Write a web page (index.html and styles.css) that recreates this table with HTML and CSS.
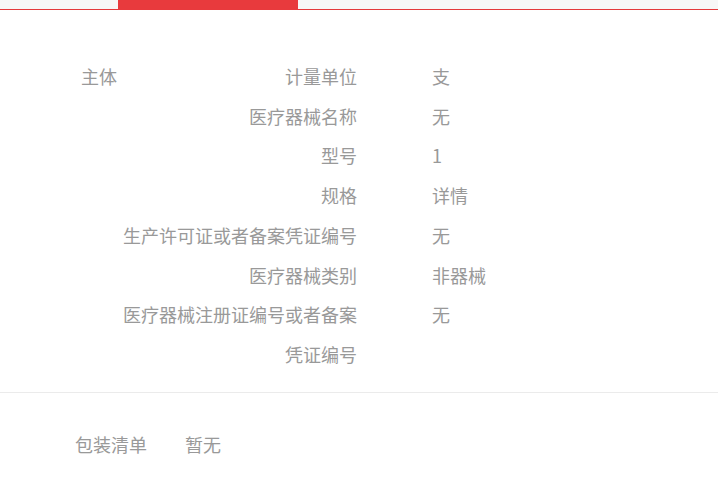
FILE: index.html
```html
<!DOCTYPE html>
<html lang="zh-CN">
<head>
<meta charset="utf-8">
<title>规格参数</title>
<link rel="stylesheet" href="styles.css">
</head>
<body>
<div class="tabbar"><div class="tab"></div></div>
<div class="spec">
  <div class="spec-title">主体</div>
  <dl class="spec-list">
    <dt>计量单位</dt><dd>支</dd>
    <dt>医疗器械名称</dt><dd>无</dd>
    <dt>型号</dt><dd>1</dd>
    <dt>规格</dt><dd>详情</dd>
    <dt>生产许可证或者备案凭证编号</dt><dd>无</dd>
    <dt>医疗器械类别</dt><dd>非器械</dd>
    <dt>医疗器械注册证编号或者备案凭证编号</dt><dd>无</dd>
  </dl>
</div>
<div class="divider"></div>
<div class="package">
  <span class="package-label">包装清单</span>
  <span class="package-value">暂无</span>
</div>
</body>
</html>
```
FILE: styles.css
```css
html, body {
  margin: 0;
  padding: 0;
  background: #fff;
}
body {
  font-family: "Noto Sans CJK SC", "Microsoft YaHei", sans-serif;
  font-size: 18px;
  color: #999;
}
.tabbar {
  height: 9px;
  background: #f7f7f7;
  border-bottom: 1px solid #e4393c;
  padding-left: 118px;
}
.tab {
  width: 180px;
  height: 10px;
  background: #e83a3d;
}
.spec {
  display: flex;
  margin-top: 47px;
  padding-left: 81px;
  line-height: 39.7px;
}
.spec-title {
  width: 42px;
  flex: none;
}
.spec-list {
  margin: 0;
  display: grid;
  grid-template-columns: 234px auto;
  column-gap: 75px;
  align-items: start;
}
.spec-list dt {
  text-align: right;
}
.spec-list dd {
  margin: 0;
}
.divider {
  margin-top: 17px;
  height: 1px;
  background: #ebebeb;
}
.package {
  display: flex;
  margin-top: 31px;
  padding-left: 75px;
  line-height: 40px;
  gap: 38px;
}
```
